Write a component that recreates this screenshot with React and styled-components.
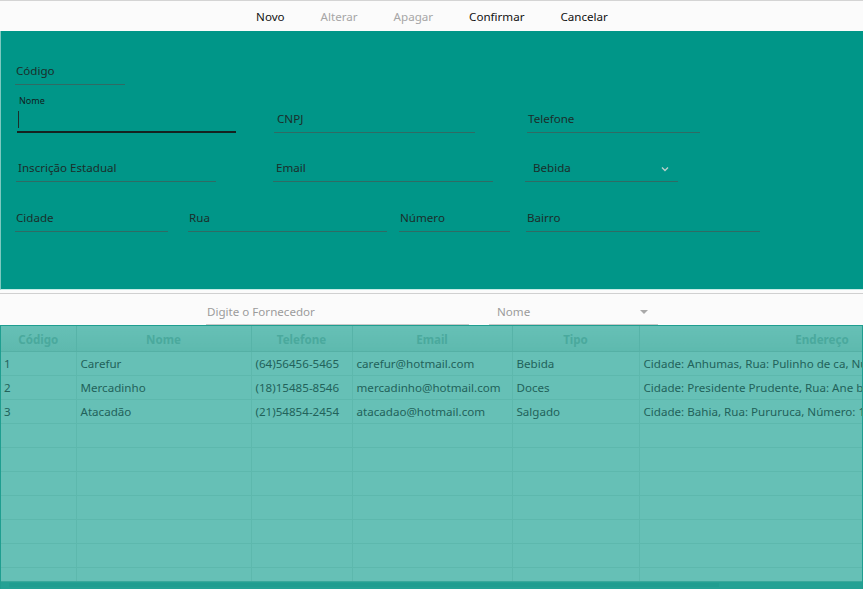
import React from "react";
import styled, { createGlobalStyle } from "styled-components";

const Global = createGlobalStyle`
  html, body { margin: 0; padding: 0; background: #fbfbfb; overflow: hidden; }
  body { font-family: "Noto Sans", "Open Sans", sans-serif; font-size: 11.3px; }
  #root { width: 863px; height: 589px; overflow: hidden; }
`;

const Page = styled.div`
  width: 863px;
  height: 589px;
  display: flex;
  flex-direction: column;
  overflow: hidden;
`;

const Toolbar = styled.div`
  height: 30px;
  border-top: 1px solid #d4d4d4;
  background: #fbfbfb;
  display: flex;
  align-items: center;
  justify-content: center;
  padding-left: 1px;
`;

const ToolButton = styled.button`
  border: none;
  background: transparent;
  font-family: inherit;
  font-size: 11.6px;
  padding: 0 18px;
  color: ${(p) => (p.$disabled ? "#a6a6a6" : "#111")};
  height: 30px;
  cursor: default;
`;

const FormPanel = styled.div`
  height: 259px;
  flex-shrink: 0;
  background: #009688;
  border-left: 1px solid #7cc9c0;
  display: flex;
  flex-direction: column;
  box-sizing: border-box;
  border-bottom: 1px solid #c5ebe6;
`;

const FormRow = styled.div`
  display: flex;
  align-items: flex-end;
  margin-top: ${(p) => p.$mt}px;
`;

const Field = styled.div`
  position: relative;
  box-sizing: border-box;
  width: ${(p) => p.$w}px;
  margin-left: ${(p) => p.$ml}px;
  height: ${(p) => (p.$focused ? 26 : 27)}px;
  border-bottom: ${(p) => (p.$focused ? "2px solid #15221f" : "1px solid #2f6b64")};
  display: flex;
  align-items: flex-end;
  justify-content: space-between;
  padding: 0 ${(p) => p.$pr || 0}px ${(p) => (p.$focused ? 4 : 5)}px ${(p) => p.$pl || 1}px;
  color: #1b2e2b;
  font-size: 11.6px;
  line-height: 16px;
`;

const FloatLabel = styled.span`
  position: absolute;
  left: 2px;
  top: -12px;
  font-size: 9px;
  line-height: 11px;
  color: #10201d;
`;

const Caret = styled.span`
  display: inline-block;
  width: 1px;
  height: 17px;
  background: #1b2e2b;
  margin-bottom: -1px;
`;

const Chevron = () => (
  <svg width="8" height="6" viewBox="0 0 8 6" style={{ marginBottom: 4 }}>
    <path d="M1 1.5 L4 4.5 L7 1.5" fill="none" stroke="#b9cfcb" strokeWidth="1.4" />
  </svg>
);

const SearchBar = styled.div`
  height: 31px;
  flex-shrink: 0;
  margin-top: 3px;
  border-top: 1px solid #d0d0d0;
  background: #fbfbfb;
  display: flex;
  align-items: flex-end;
`;

const SearchField = styled.div`
  box-sizing: border-box;
  width: ${(p) => p.$w}px;
  margin-left: ${(p) => p.$ml}px;
  height: 24px;
  border-bottom: 1px solid #c9c9c9;
  display: flex;
  align-items: center;
  justify-content: space-between;
  padding: 0 10px 2px ${(p) => p.$pl}px;
  color: #9b9b9b;
  font-size: 11.6px;
`;

const Triangle = styled.span`
  width: 0;
  height: 0;
  border-left: 4px solid transparent;
  border-right: 4px solid transparent;
  border-top: 4px solid #a9a9a9;
`;

const TableWrap = styled.div`
  flex: 1;
  border: 1px solid #1f9e90;
  border-bottom: none;
  background: #66c0b6;
  overflow: hidden;
  position: relative;
`;

const Table = styled.table`
  border-collapse: collapse;
  table-layout: fixed;
  width: 1004px;
  font-size: 11.6px;
`;

const Th = styled.th`
  height: 24px;
  padding: 1px 0 0;
  font-weight: 700;
  color: #4aa99d;
  background: linear-gradient(#66c0b6, #5eb9ae);
  border-right: 1px solid #57b3a8;
  border-bottom: 1px solid #55b0a5;
  text-align: center;
  white-space: nowrap;
`;

const Td = styled.td`
  height: 23px;
  padding: 0 4px 0 ${(p) => p.$pl || 4}px;
  color: #22625a;
  border-right: 1px solid #5db8ad;
  border-bottom: 1px solid #5db8ad;
  white-space: nowrap;
  overflow: hidden;
`;

const Scrollbar = styled.div`
  position: absolute;
  left: 0;
  right: 0;
  bottom: 0;
  height: 7px;
  background: #24a194;
  border-top: 1px solid #3aa89b;
`;

const Thumb = styled.div`
  margin-left: 8px;
  width: 710px;
  height: 4px;
  margin-top: 1px;
  background: #209d90;
`;

const cols = [75, 175, 101, 160, 127, 366];
const headers = ["Código", "Nome", "Telefone", "Email", "Tipo", "Endereço"];
const rows = [
  ["1", "Carefur", "(64)56456-5465", "carefur@hotmail.com", "Bebida", "Cidade: Anhumas, Rua: Pulinho de ca, Número: 12, Bairro: Centro"],
  ["2", "Mercadinho", "(18)15485-8546", "mercadinho@hotmail.com", "Doces", "Cidade: Presidente Prudente, Rua: Ane bal, Número: 45, Bairro: Jardim"],
  ["3", "Atacadão", "(21)54854-2454", "atacadao@hotmail.com", "Salgado", "Cidade: Bahia, Rua: Pururuca, Número: 10, Bairro: Vila"],
];
const emptyRows = 7;

export default function App() {
  return (
    <Page>
      <Global />
      <Toolbar>
        <ToolButton>Novo</ToolButton>
        <ToolButton $disabled>Alterar</ToolButton>
        <ToolButton $disabled>Apagar</ToolButton>
        <ToolButton>Confirmar</ToolButton>
        <ToolButton>Cancelar</ToolButton>
      </Toolbar>
      <FormPanel>
        <FormRow $mt={27}>
          <Field $w={110} $ml={14}>Código</Field>
        </FormRow>
        <FormRow $mt={21}>
          <Field $w={219} $ml={16} $focused>
            <FloatLabel>Nome</FloatLabel>
            <Caret />
          </Field>
          <Field $w={201} $ml={38} $pl={3}>CNPJ</Field>
          <Field $w={173} $ml={52}>Telefone</Field>
        </FormRow>
        <FormRow $mt={22}>
          <Field $w={200} $ml={15} $pl={2}>Inscrição Estadual</Field>
          <Field $w={220} $ml={57} $pl={3}>Email</Field>
          <Field $w={153} $ml={32} $pl={8} $pr={9}>
            <span>Bebida</span>
            <Chevron />
          </Field>
        </FormRow>
        <FormRow $mt={23}>
          <Field $w={153} $ml={14} $pl={1}>Cidade</Field>
          <Field $w={199} $ml={20} $pl={1}>Rua</Field>
          <Field $w={111} $ml={12} $pl={1}>Número</Field>
          <Field $w={234} $ml={16} $pl={1}>Bairro</Field>
        </FormRow>
      </FormPanel>
      <SearchBar>
        <SearchField $w={263} $ml={206} $pl={1}>Digite o Fornecedor</SearchField>
        <SearchField $w={169} $ml={20} $pl={8}>
          <span>Nome</span>
          <Triangle />
        </SearchField>
      </SearchBar>
      <TableWrap>
        <Table>
          <colgroup>
            {cols.map((w, i) => (
              <col key={i} style={{ width: w }} />
            ))}
          </colgroup>
          <thead>
            <tr>
              {headers.map((h) => (
                <Th key={h}>{h}</Th>
              ))}
            </tr>
          </thead>
          <tbody>
            {rows.map((r) => (
              <tr key={r[0]}>
                {r.map((c, i) => (
                  <Td key={i} $pl={i === 0 ? 3 : 4}>{c}</Td>
                ))}
              </tr>
            ))}
            {Array.from({ length: emptyRows }).map((_, k) => (
              <tr key={"e" + k}>
                {cols.map((_, i) => (
                  <Td key={i} />
                ))}
              </tr>
            ))}
          </tbody>
        </Table>
        <Scrollbar>
          <Thumb />
        </Scrollbar>
      </TableWrap>
    </Page>
  );
}
